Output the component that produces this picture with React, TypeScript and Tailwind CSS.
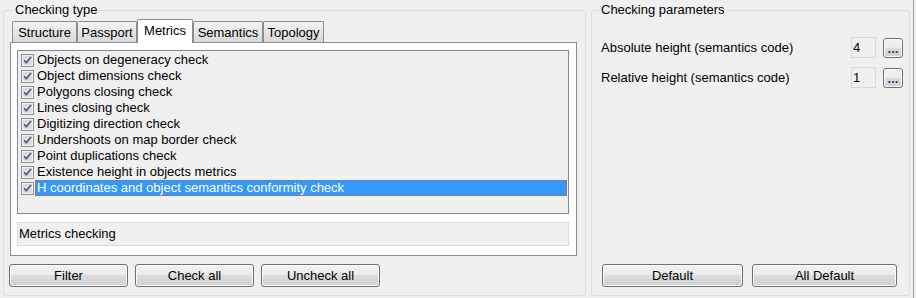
import React from "react";

const checks = [
  "Objects on degeneracy check",
  "Object dimensions check",
  "Polygons closing check",
  "Lines closing check",
  "Digitizing direction check",
  "Undershoots on map border check",
  "Point duplications check",
  "Existence height in objects metrics",
  "H coordinates and object semantics conformity check",
];

const tabs = [
  { name: "Structure", w: "w-[65px]" },
  { name: "Passport", w: "w-[60px]" },
  { name: "Metrics", w: "w-[56px]", active: true },
  { name: "Semantics", w: "w-[70px]" },
  { name: "Topology", w: "w-[61px]" },
];

const btn =
  "h-[23px] rounded-[3px] border border-[#707070] bg-[linear-gradient(#f2f2f2,#ebebeb_50%,#dddddd_50%,#cfcfcf)] shadow-[inset_0_0_0_1px_#fbfbfb] flex items-center justify-center";

const CheckBox = () => (
  <svg width="13" height="13" viewBox="0 0 13 13" className="shrink-0">
    <rect x="0.5" y="0.5" width="12" height="12" fill="#f3f3f3" stroke="#8e8f8f" />
    <rect x="2" y="2" width="9" height="9" fill="#dcdcdc" />
    <path d="M3 6.3 L5.3 8.8 L10 3" fill="none" stroke="#4c5f86" strokeWidth="1.7" />
  </svg>
);

const Param = ({ label, value, className = "" }: { label: string; value: string; className?: string }) => (
  <div className={"flex items-center h-[21px] pl-[9px] pr-[6px] " + className}>
    <span className="flex-1">{label}</span>
    <div className="w-[25px] h-[21px] border border-[#d9d9d9] bg-[#f0f0f0] pl-[1px] flex items-center">{value}</div>
    <div className={"ml-[7px] w-[20px] !h-[20px] font-bold text-[#1d3f8a] " + btn}>
      <span className="mt-[3px]">...</span>
    </div>
  </div>
);

export default function App() {
  return (
    <div className="w-[916px] h-[298px] bg-[#f0f0f0] flex font-['Liberation_Sans',Arial,sans-serif] text-[13px] leading-[16px] text-black">
      <fieldset className="ml-[3px] mt-[2px] w-[583px] h-[294px] border border-[#d5dfe5] rounded-[3px] flex flex-col">
        <legend className="ml-[9px] px-[2px] leading-[16px]">Checking type</legend>

        <div className="flex items-end h-[24px] ml-[8px]">
          {tabs.map((t) =>
            t.active ? (
              <div
                key={t.name}
                className={`${t.w} h-[24px] -mb-[1px] relative z-10 bg-white border border-b-0 border-[#898c95] rounded-t-[2px] flex justify-center pt-[3px]`}
              >
                {t.name}
              </div>
            ) : (
              <div
                key={t.name}
                className={`${t.w} h-[21px] bg-linear-to-b from-[#f4f4f4] to-[#d8d8d8] border border-b-0 border-[#898c95] rounded-t-[2px] flex justify-center pt-[3px]`}
              >
                {t.name}
              </div>
            )
          )}
        </div>

        <div className="ml-[6px] w-[567px] h-[214px] border border-[#898c95] bg-white pt-[7px] pl-[6px]">
          <div className="w-[552px] h-[164px] border border-[#828790] bg-[#f0f0f0] pt-[1px]">
            {checks.map((c, i) => {
              const sel = i === checks.length - 1;
              return (
                <div key={c} className="h-[16px] flex items-center">
                  <div className="ml-[3px]">
                    <CheckBox />
                  </div>
                  <div
                    className={
                      "ml-[1px] mr-[1px] flex-1 h-[16px] pl-[1px] border flex items-center " +
                      (sel ? "bg-[#3399ff] text-white border-dotted border-[#c0661a]" : "border-transparent")
                    }
                  >
                    {c}
                  </div>
                </div>
              );
            })}
          </div>
          <div className="mt-[8px] w-[552px] h-[24px] border border-[#dadada] bg-[#f0f0f0] pl-[1px] flex items-center">
            Metrics checking
          </div>
        </div>

        <div className="mt-[8px] ml-[5px] flex gap-[7px]">
          <div className={"w-[119px] " + btn}>Filter</div>
          <div className={"w-[119px] " + btn}>Check all</div>
          <div className={"w-[119px] " + btn}>Uncheck all</div>
        </div>
      </fieldset>

      <fieldset className="ml-[5px] mt-[2px] w-[319px] h-[294px] border border-[#d5dfe5] rounded-[3px] flex flex-col">
        <legend className="ml-[7px] px-[2px] leading-[16px]">Checking parameters</legend>
        <Param className="mt-[19px]" label="Absolute height (semantics code)" value="4" />
        <Param className="mt-[9px]" label="Relative height (semantics code)" value="1" />
        <div className="mt-auto mb-[8px] pl-[10px] flex gap-[9px]">
          <div className={"w-[141px] " + btn}>Default</div>
          <div className={"w-[145px] " + btn}>All Default</div>
        </div>
      </fieldset>

      <div className="ml-[3px] w-[1px] bg-[#a0a0a0]" />
    </div>
  );
}
